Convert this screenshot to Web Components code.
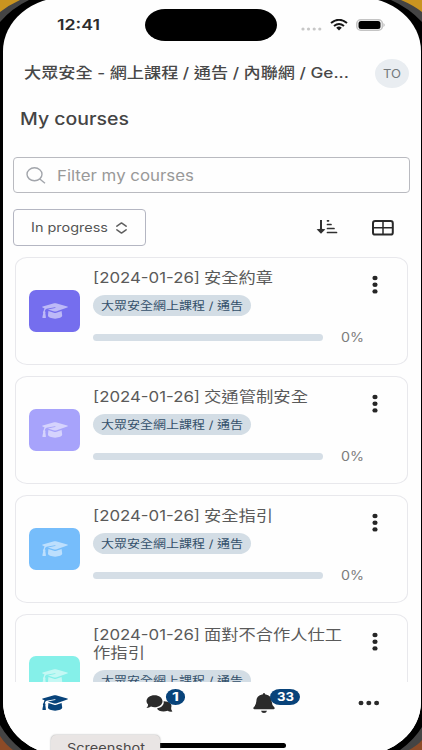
<!DOCTYPE html>
<html lang="zh-Hant">
<head>
<meta charset="utf-8">
<title>My courses</title>
<style>
html,body{margin:0;height:100%;overflow:hidden}
body{width:422px;height:750px;background:#000;font-family:Inter,"Noto Sans CJK TC",sans-serif;color:#444}
</style>
</head>
<body>
<phone-frame>
  <status-bar></status-bar>
  <site-header></site-header>
  <course-filters></course-filters>
  <course-list>
    <course-card color="#756eee" parts="[2024-01-26]:107|安全約章:69"></course-card>
    <course-card color="#a7a3fb" parts="[2024-01-26]:107|交通管制安全:104"></course-card>
    <course-card color="#76bdfb" parts="[2024-01-26]:107|安全指引:69"></course-card>
    <course-card color="#85f0e9" tall parts="[2024-01-26]:107|面對不合作人仕工:138" second="作指引:52"></course-card>
  </course-list>
  <tab-bar></tab-bar>
</phone-frame>
<script>
const define=(name,html,setup)=>customElements.define(name,class extends HTMLElement{
  connectedCallback(){
    if(this.shadowRoot)return;
    const root=this.attachShadow({mode:'open'});
    root.innerHTML=typeof html==='function'?html(this):html;
    if(setup)setup(this,root);
  }
});

/* One line of text stretched horizontally to the width given in "w". */
define('wide-text','<style>:host{display:block;flex:none;white-space:nowrap}span{display:inline-block;transform-origin:0 50%}</style><span><slot></slot></span>',(el,root)=>{
  const w=+el.getAttribute('w'),s=root.querySelector('span');
  const natural=s.getBoundingClientRect().width;
  el.style.width=w+'px';
  if(natural)s.style.transform='scaleX('+w/natural+')';
});

define('cap-icon',`<style>:host{display:block;width:26px;height:16px}svg{display:block;width:100%;height:100%}</style>
<svg viewBox="0 0 26 16" preserveAspectRatio="none" fill="currentColor"><path d="M12.1.3q.9-.3 1.8 0l11.4 3.3q1.2.5 0 1L14 8.4q-.9.3-1.8 0L5.9 6.5l7.2-1.5q.7-.2.5-.6t-.8-.2L4.5 5.8Q3 6.5 2.8 8.3q1.2.5.5 1.7l.6 4.3q.1.7-.7.7H.9q-.7 0-.5-.7L1.2 10q-.8-1.2.4-1.7.1-1.5 1-2.800L.7 4.600q-1.200-.5 0-1zM6.400 8l5.400 1.700q1.300.4 2.600 0L19.600 8l.6 4.600c0 1.800-3.200 3.100-7.100 3.100S6 14.400 6 12.600z"/></svg>`);

define('phone-frame',`<style>
:host{display:block;position:relative;width:422px;height:750px;overflow:hidden;background:#000}
.bg,.ind{position:absolute;display:block}.bg{left:0;top:0}
.screen{position:absolute;left:3px;top:-3px;width:418px;height:759px;border-radius:64px/54px;background:#fefefe;overflow:hidden}
.content{display:flex;flex-direction:column;height:750px;margin:3px 0 0 -3px;width:422px}
.ind{left:130px;top:743px;width:156px;height:5px;border-radius:3px;background:#000}
.tip{position:absolute;left:51px;top:735px;width:109px;height:24px;box-sizing:border-box;padding:3px 0 0 16px;border-radius:5px;background:#e9e5e4;box-shadow:0 0 2px #999;font-size:13px;line-height:20px;color:#4b4848}
</style>
<svg class="bg" width="422" height="750"><path fill="#444" d="M0 0H29Q12 8 0 22zM422 0H391Q409 8 422 22zM0 725Q8 739 22 750H0zM422 727Q414 740 400 750H422z"/><path fill="#c99420" d="M0 0H20Q9 5 0 12zM422 0H401Q413 5 422 12z"/><path fill="#8d4b27" d="M0 736Q5 744 13 750H0zM422 740Q418 745 409 750H422z"/></svg>
<div class="screen"><div class="content"><slot></slot></div></div>
<div class="ind"></div><div class="tip"><wide-text w="78">Screenshot</wide-text></div>`);

define('status-bar',`<style>
:host{display:flex;flex:none;height:50px;align-items:center;color:#2c2c2c;padding:0 36px 0 57px;box-sizing:border-box}
.t{font-size:15px;font-weight:600;line-height:20px;margin-right:45px}
.island{width:133px;height:32px;border-radius:20px/16px;background:#000;margin-right:24px}
.d{margin:7px 8px 0 0}.w{margin-right:8px}svg{display:block;flex:none}
</style><wide-text class="t" w="43">12:41</wide-text><div class="island"></div>
<svg class="d" width="21" height="4" fill="#c7c7c7"><circle cx="2" cy="2" r="1.6"/><circle cx="7.500" cy="2" r="1.6"/><circle cx="13.200" cy="2" r="1.600"/><circle cx="18.800" cy="2" r="1.6"/></svg>
<svg class="w" width="18" height="12" viewBox="0 0 18 12" fill="none" stroke="#171717" stroke-width="2"><path d="M1 4Q9-2.400 17 4M4 7Q9 3 14 7"/><path d="M6.200 8.700Q9 6.500 11.800 8.700L9 11.600z" fill="#171717" stroke="none"/></svg>
<svg width="30" height="12"><rect x=".8" y=".8" width="25.600" height="10.400" rx="4" fill="none" stroke="#c4c4c4" stroke-width="1.600"/><rect x="2.500" y="2" width="22" height="8" rx="2.500"/><path d="M27.500 4Q30 6 27.500 8z" fill="#bbb"/></svg>`);

define('site-header',`<style>
:host{display:flex;flex:none;flex-direction:column;height:107px}
.row{display:flex;height:46px;align-items:center;padding-left:24px}
.title{font-size:14.5px;font-weight:500;line-height:20px;display:flex;color:#484848}
.av{margin-left:26px;width:34px;height:29px;border-radius:50%;background:#e9edf1;display:flex;align-items:center;justify-content:center;font-size:12px;color:#74797d}
.my{margin:11px 0 0 20px;font-size:17px;line-height:24px;color:#444;font-weight:500}
</style><div class="row"><wide-text class="title" w="325">大眾安全 - 網上課程 / 通告 / 內聯網 / Ge...</wide-text><div class="av"><wide-text w="18">TO</wide-text></div></div>
<wide-text class="my" w="109">My courses</wide-text>`);

define('course-filters',`<style>
:host{display:flex;flex:none;flex-direction:column;height:100px;padding-left:13px}
.s{box-sizing:border-box;width:397px;height:36px;border:1px solid #b9bac0;border-radius:4px;display:flex;align-items:center;padding-left:12px;gap:11px;font-size:15px;color:#999}
.r{display:flex;align-items:center;margin-top:16px}
.b{box-sizing:border-box;width:133px;height:37px;border:1px solid #b4b6c2;border-radius:4px;display:flex;align-items:center;padding-left:17px;gap:8px;font-size:12.5px;color:#555}
svg{display:block;flex:none}.sort{margin:-2px 34px 0 170px}
</style><div class="s"><svg width="20" height="17" fill="none" stroke="#a2a5ab" stroke-width="1.400"><ellipse cx="8.500" cy="7.300" rx="7.500" ry="6.500"/><path d="M13.800 12L19 16.300"/></svg><wide-text w="137">Filter my courses</wide-text></div>
<div class="r"><div class="b"><wide-text w="77">In progress</wide-text><svg width="11" height="12" fill="none" stroke="#606060" stroke-width="1.500" stroke-linecap="round" stroke-linejoin="round"><path d="M.9 4.200L5.500.9 10.100 4.200M.9 7.800L5.500 11.100 10.100 7.800"/></svg></div>
<svg class="sort" width="22" height="16" fill="none" stroke="#303030"><path stroke-width="2" d="M5 1V12"/><path fill="#303030" stroke="none" d="M.6 10.200Q5 9.200 9.400 10.200L5 14.800z"/><path stroke-width="1.700" stroke-linecap="round" d="M11.500 1.800H12.500M11.500 5.500H15M11.500 9.500H18M11.500 13.500H20.500"/></svg>
<svg width="22" height="16" fill="none" stroke="#292929"><rect x="1" y="1" width="19.800" height="13.600" rx="2.200" stroke-width="2"/><path stroke-width="1.500" d="M11 1V15M1 7.800H21"/></svg></div>`);

define('course-list',`<style>:host{display:flex;flex:none;flex-direction:column;gap:11px;height:425px;overflow:hidden;padding-left:15px}</style><slot></slot>`);

const segments=s=>s.split('|').map(p=>{const i=p.lastIndexOf(':');return `<wide-text w="${p.slice(i+1)}">${p.slice(0,i)}</wide-text>`}).join('');
define('course-card',el=>`<style>
:host{display:flex;flex:none;box-sizing:border-box;width:393px;height:108px;border:1px solid #e8e8ec;border-radius:12px/10px;background:#fefefe;padding-left:13px;align-items:center}
:host([tall]){height:126px}
.i{flex:none;width:51px;height:42px;border-radius:7px;background:${el.getAttribute('color')};display:flex;align-items:center;justify-content:center;color:rgba(255,255,255,.52)}
.m{align-self:stretch;width:271px;margin-left:13px;padding-top:11px}
.l{display:flex;gap:4px;font-size:14.5px;line-height:18px;height:18px;color:#5a5a5a}
.g{width:158px;height:21px;box-sizing:border-box;padding-left:8px;border-radius:12px/10.500px;background:#d3dde5;color:#34506a;font-size:11px;line-height:22px;margin-top:8px}
.p{display:flex;align-items:center;height:18px;margin-top:12px;font-size:12.500px;color:#7c7c7c;gap:18px}
.p i{width:230px;height:7px;border-radius:4px;background:#d5dee6}
.k{align-self:flex-start;margin:17px 0 0 8px}svg{display:block;flex:none}
</style><div class="i"><cap-icon></cap-icon></div>
<div class="m"><div class="l">${segments(el.getAttribute('parts'))}</div>${el.hasAttribute('second')?`<div class="l">${segments(el.getAttribute('second'))}</div>`:''}
<div class="g"><wide-text w="142">大眾安全網上課程 / 通告</wide-text></div><div class="p"><i></i><wide-text w="23">0%</wide-text></div></div>
<svg class="k" width="6" height="20" fill="#262626"><ellipse cx="3" cy="3" rx="2.600" ry="2.200"/><ellipse cx="3" cy="9.700" rx="2.600" ry="2.200"/><ellipse cx="3" cy="16.400" rx="2.600" ry="2.200"/></svg>`);

define('tab-bar',`<style>
:host{display:grid;flex:none;grid-template-columns:106px 104px 106px 106px;height:68px;background:#fefefe;color:#2b2b2b}
.c{position:relative}.c>svg,.c>cap-icon{display:block}
.n{position:absolute;height:16px;border-radius:10px/8px;background:#08437a;color:#fff;font-size:11.5px;font-weight:700;line-height:16px;display:flex;justify-content:center}
</style><div class="c"><cap-icon style="color:#08437a;margin:13px 0 0 42px"></cap-icon></div>
<div class="c"><svg style="margin:13px 0 0 40px" width="27" height="18" fill="currentColor"><path d="M17.600 6.200C23 6 26.600 9 25.200 12.500Q24.600 14 26.400 16.600 23.500 17 21.500 15.800C17 17.400 12 16 11 13.400 15 12.800 18.500 10 17.600 6.200z"/><path d="M8.500.2C13 .2 16.500 2.800 16.500 6.200S13 12.200 8.500 12.200Q6.700 12.200 5 11.600 3 13 .5 12.900 2.300 11 2.100 9.400.5 8 .5 6.200C.5 2.800 4 .2 8.500.2z"/></svg><div class="n" style="left:60px;top:7px;width:19px"><wide-text w="7">1</wide-text></div></div>
<div class="c"><svg style="margin:10px 0 0 43px" width="23" height="22" fill="currentColor"><path d="M10 2.200V1.600Q11 .2 12 1.600V2.200C17 3 18.500 6 18.600 9Q18.800 13 21.300 15.200 22.300 17 20.500 17.300H1.500Q-.3 17 .7 15.200 3.200 13 3.400 9C3.500 6 5 3 10 2.200zM8 18.700H14Q13.500 21 11 21T8 18.700z"/></svg><div class="n" style="left:60px;top:7px;width:30px"><wide-text w="17">33</wide-text></div></div>
<div class="c"><svg style="margin:18px 0 0 42px" width="23" height="6" fill="currentColor"><ellipse cx="3" cy="3" rx="2.500" ry="2.200"/><ellipse cx="10.800" cy="3" rx="2.500" ry="2.200"/><ellipse cx="18.600" cy="3" rx="2.500" ry="2.200"/></svg></div>`);
</script>
</body>
</html>
